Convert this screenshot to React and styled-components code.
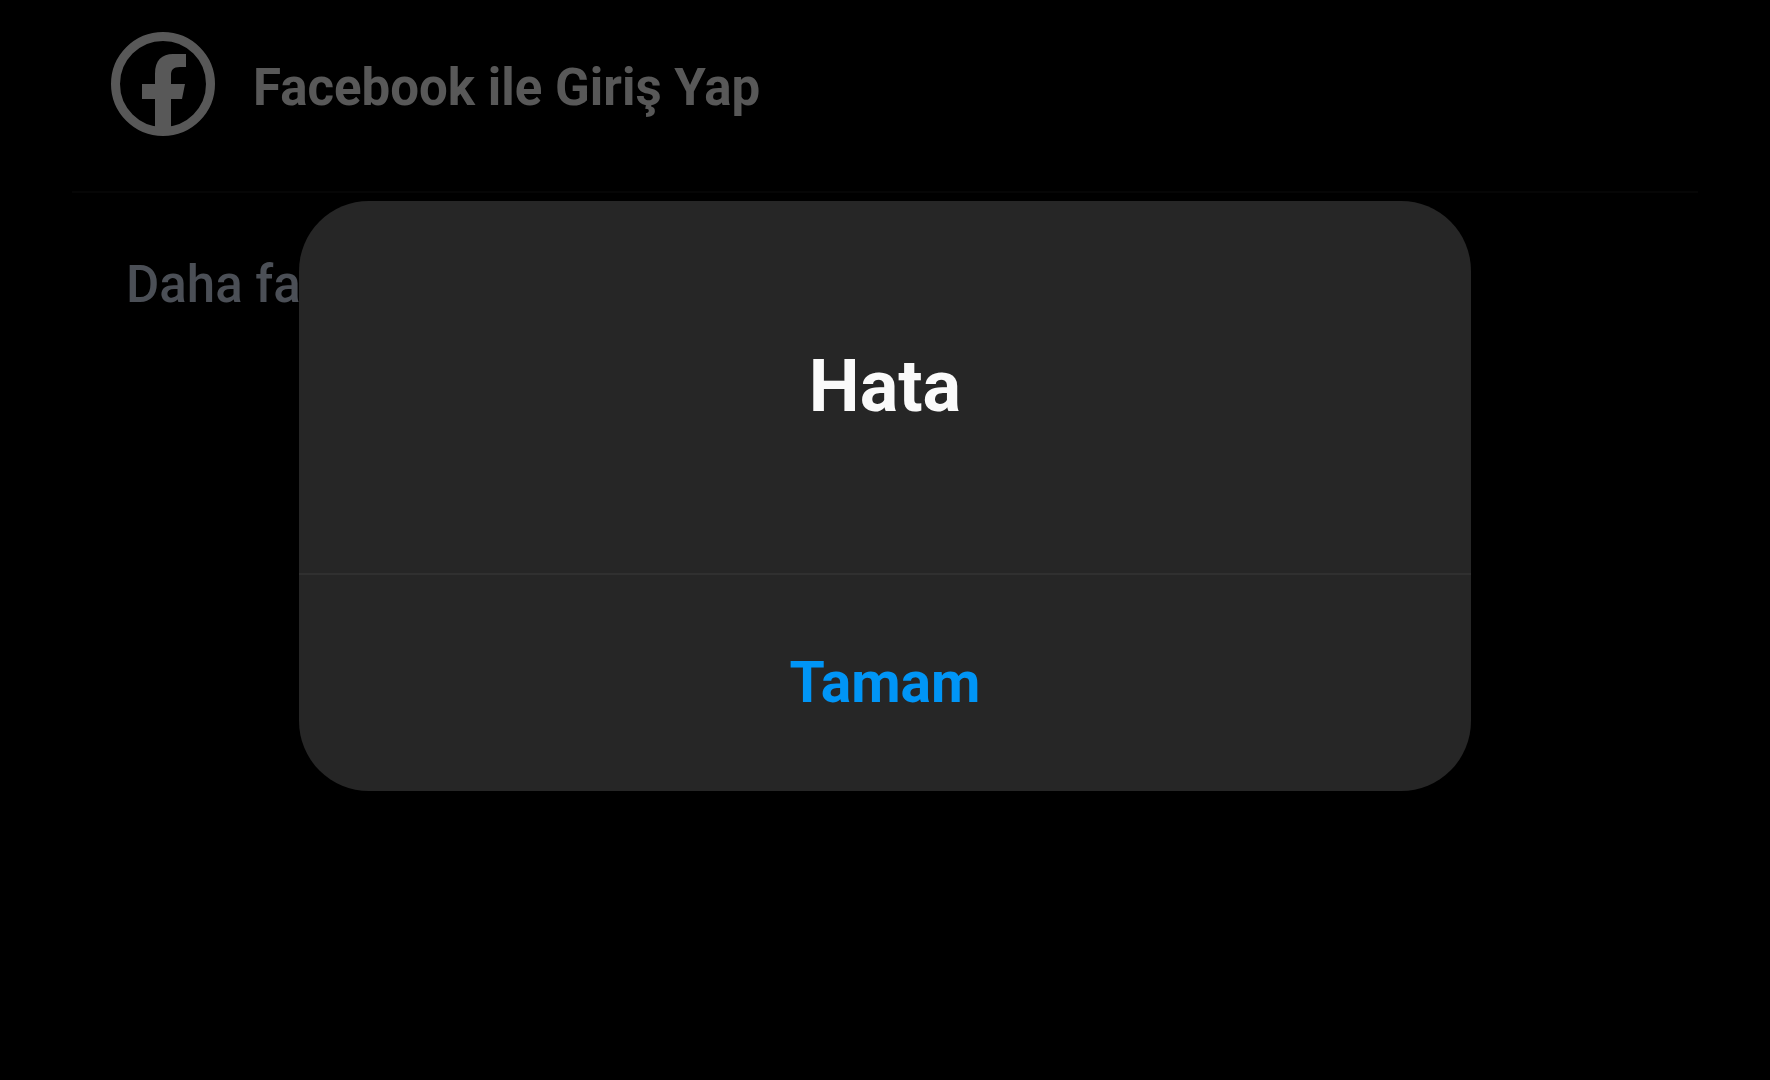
import React from "react";
import styled, { createGlobalStyle } from "styled-components";

const App = () => {
  return (
    <>
      <GlobalStyle />
      <Page>
        <LoginButton type="button">
          <FacebookIcon />
          <LoginLabel>Facebook ile Giriş Yap</LoginLabel>
        </LoginButton>
        <Divider />
        <MoreLink href="#more">Daha fa</MoreLink>
      </Page>

      <Overlay>
        <Dialog role="alertdialog" aria-modal="true" aria-labelledby="title">
          <Title id="title">Hata</Title>
          <ConfirmButton type="button">Tamam</ConfirmButton>
        </Dialog>
      </Overlay>
    </>
  );
};

const FacebookIcon = () => (
  <Icon viewBox="0 0 104 104" aria-hidden="true">
    <circle
      cx="52"
      cy="52"
      r="47.5"
      fill="none"
      stroke="currentColor"
      strokeWidth="9"
    />
    <path
      fill="currentColor"
      d="M44 98V67H31V52H44V42C44 28 51 22 62 22H75V35H69C62 35 60 38 60 43V52H74L71 67H60V98Z"
    />
  </Icon>
);

const GlobalStyle = createGlobalStyle`
  * {
    box-sizing: border-box;
  }

  body {
    margin: 0;
    background-color: #000;
    font-family: Roboto, "Liberation Sans", sans-serif;
  }
`;

const Page = styled.main`
  display: flex;
  flex-direction: column;
  align-items: flex-start;
  padding: 32px 72px;
`;

const LoginButton = styled.button`
  display: flex;
  align-items: center;
  gap: 38px;
  margin-left: 39px;
  padding: 0;
  border: none;
  background: none;
  color: #585858;
  font-family: inherit;
  font-size: 51px;
  font-weight: 700;
  line-height: 60px;
  cursor: pointer;
`;

const LoginLabel = styled.span`
  padding-top: 8px;
`;

const Icon = styled.svg`
  flex: none;
  width: 104px;
  height: 104px;
`;

const Divider = styled.hr`
  align-self: stretch;
  height: 2px;
  margin: 55px 0 0;
  border: none;
  background-color: #060606;
`;

const MoreLink = styled.a`
  margin: 62px 0 0 54px;
  color: #4b4f56;
  font-size: 51px;
  font-weight: 500;
  line-height: 60px;
  text-decoration: none;
`;

const Overlay = styled.div`
  position: fixed;
  inset: 0;
  display: flex;
  align-items: center;
  justify-content: center;
  padding-bottom: 88px;
`;

const Dialog = styled.div`
  display: flex;
  flex-direction: column;
  width: 90%;
  max-width: 1172px;
  border-radius: 70px;
  background-color: #262626;
  overflow: hidden;
`;

const Title = styled.h2`
  margin: 0;
  padding: 142px 40px;
  border-bottom: 2px solid #303030;
  color: #fafafa;
  font-size: 72px;
  font-weight: 700;
  line-height: 88px;
  text-align: center;
`;

const ConfirmButton = styled.button`
  padding: 72px 40px;
  border: none;
  background: none;
  color: #0095f6;
  font-family: inherit;
  font-size: 57px;
  font-weight: 700;
  line-height: 72px;
  cursor: pointer;
`;

export default App;
